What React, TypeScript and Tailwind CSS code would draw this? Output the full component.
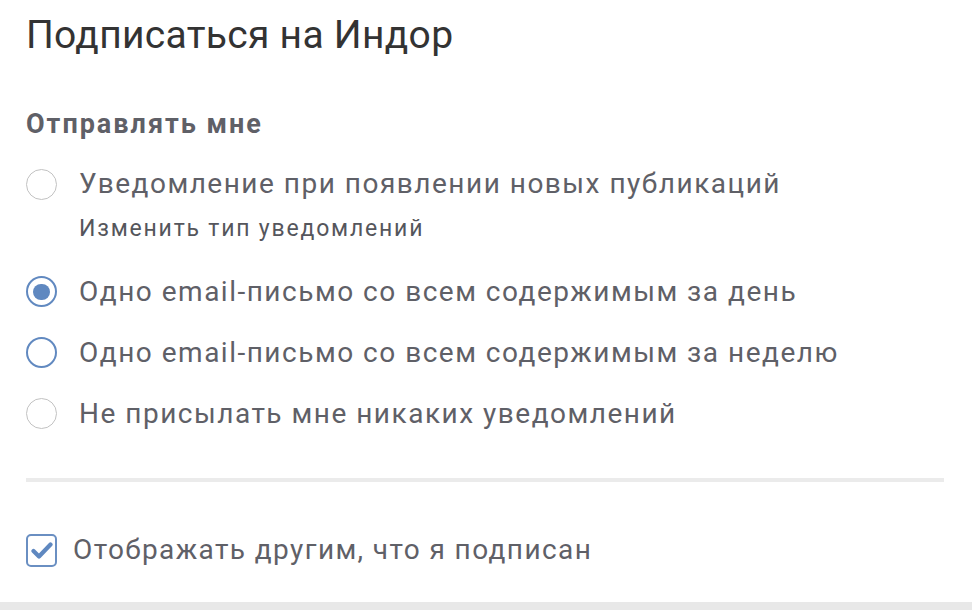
import React from "react";

const options = [
  { label: "Уведомление при появлении новых публикаций", hint: "Изменить тип уведомлений" },
  { label: "Одно email-письмо со всем содержимым за день", checked: true },
  { label: "Одно email-письмо со всем содержимым за неделю", focused: true },
  { label: "Не присылать мне никаких уведомлений" },
];

function Radio({ checked, focused }: { checked?: boolean; focused?: boolean }) {
  const ring = checked || focused ? "border-[#6189c0] border-2" : "border-[#c2c2c2] border-[1.5px]";
  return (
    <span className={`w-[31px] h-[31px] shrink-0 rounded-full flex items-center justify-center ${ring}`}>
      {checked && <span className="w-[17px] h-[16px] rounded-full bg-[#5f88c0]" />}
    </span>
  );
}

export default function App() {
  return (
    <div className="w-[972px] h-[610px] bg-white flex flex-col overflow-hidden" style={{ fontFamily: "Roboto, 'Noto Sans', sans-serif" }}>
      <div className="flex-1 px-[26px] pr-[28px]">
        <h1 className="h-[70px] leading-[70px] text-[39px] tracking-[0.3px] text-[#333333] font-normal whitespace-nowrap">Подписаться на Индор</h1>

        <h2 className="mt-[34px] leading-[40px] text-[27px] tracking-[2px] font-bold text-[#5f6067] whitespace-nowrap">Отправлять мне</h2>

        <div className="mt-[20px]">
          {options.map((o, i) => (
            <div key={i}>
              <label className={`flex items-center gap-[22px] ${i === 0 ? "h-[40px]" : "h-[61px]"}`}>
                <Radio checked={o.checked} focused={o.focused} />
                <span className="text-[28px] tracking-[1.5px] text-[#5f6067] whitespace-nowrap">{o.label}</span>
              </label>
              {o.hint && (
                <div className="h-[30px] mt-[10px] mb-[17px] pl-[53px] leading-[30px] text-[23px] tracking-[1.8px] text-[#55565c] whitespace-nowrap">{o.hint}</div>
              )}
            </div>
          ))}
        </div>

        <div className="mt-[34px] h-[4px] bg-[#ebebeb]" />

        <label className="mt-[48px] h-[40px] flex items-center gap-[16px]">
          <span className="w-[31px] h-[33px] shrink-0 rounded-[5px] border-2 border-[#6a8fc2] flex items-center justify-center">
            <svg width="22" height="19" viewBox="0 0 22 19">
              <path d="M2.5 10 L8 15.5 L19.5 3.5" fill="none" stroke="#5f88c0" strokeWidth="4.2" strokeLinecap="round" strokeLinejoin="round" />
            </svg>
          </span>
          <span className="text-[28px] tracking-[1.4px] text-[#5f6067] whitespace-nowrap">Отображать другим, что я подписан</span>
        </label>
      </div>
      <div className="h-[8px] bg-[#e8e8e8]" />
    </div>
  );
}
